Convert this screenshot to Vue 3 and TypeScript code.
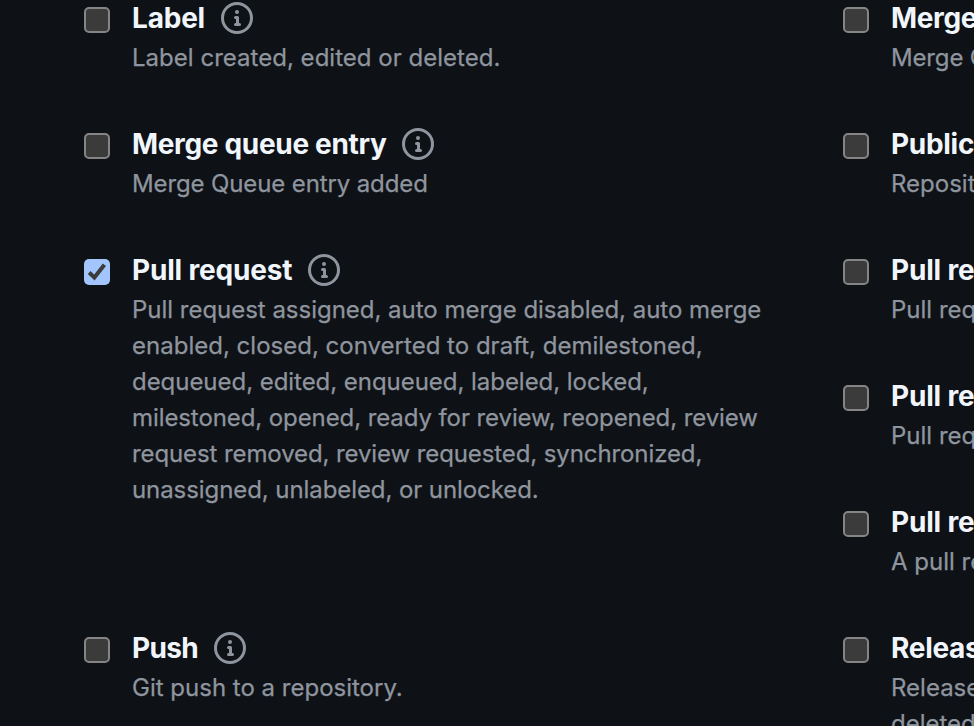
<script setup lang="ts">
interface Line { text: string; tracking?: number }
interface Item { title: string; tracking?: number; lines: Line[]; checked?: boolean; tall?: boolean }
const left: Item[] = [
  { title: 'Label', tracking: -0.2, lines: [{ text: 'Label created, edited or deleted.', tracking: 0.02 }] },
  { title: 'Merge queue entry', tracking: -0.33, lines: [{ text: 'Merge Queue entry added', tracking: -0.12 }] },
  { title: 'Pull request', tracking: -0.18, checked: true, tall: true, lines: [
    { text: 'Pull request assigned, auto merge disabled, auto merge', tracking: -0.02 },
    { text: 'enabled, closed, converted to draft, demilestoned,', tracking: 0.01 },
    { text: 'dequeued, edited, enqueued, labeled, locked,', tracking: -0.04 },
    { text: 'milestoned, opened, ready for review, reopened, review', tracking: -0.09 },
    { text: 'request removed, review requested, synchronized,', tracking: -0.1 },
    { text: 'unassigned, unlabeled, or unlocked.', tracking: -0.08 },
  ] },
  { title: 'Push', tracking: -0.65, lines: [{ text: 'Git push to a repository.' }] },
]
const right: Item[] = [
  { title: 'Merge group', tracking: -0.33, lines: [{ text: 'Merge Group requested checks', tracking: -0.15 }] },
  { title: 'Public', tracking: -0.3, lines: [{ text: 'Repository changes from private to public.' }] },
  { title: 'Pull request review comment', tracking: -0.18, lines: [{ text: 'Pull request diff comment created' }] },
  { title: 'Pull request review thread', tracking: -0.18, lines: [{ text: 'Pull request review thread resolved' }] },
  { title: 'Pull request review', tracking: -0.18, lines: [{ text: 'A pull request review submitted' }] },
  { title: 'Release', tracking: -0.3, lines: [{ text: 'Release created, edited, published,' }, { text: 'deleted, or prereleased.' }] },
]
const columns = [left, right]
const spacing = (n = 0) => ({ letterSpacing: `${n}px` })
</script>

<template>
  <main class="page">
    <section v-for="(items, c) in columns" :key="c" class="column">
      <label v-for="item in items" :key="item.title" class="item" :class="{ tall: item.tall }">
        <span class="box" :class="{ checked: item.checked }">
          <svg v-if="item.checked" width="26" height="26" viewBox="0 0 26 26"><path d="M5.2 13.5 10.4 18.6 20.4 5.8" /></svg>
        </span>
        <span class="body">
          <span class="head">
            <strong :style="spacing(item.tracking)">{{ item.title }}</strong>
            <svg class="info" width="32" height="32" viewBox="0 0 16 16"><path d="M0 8a8 8 0 1 1 16 0A8 8 0 0 1 0 8Zm8-6.5a6.5 6.5 0 1 0 0 13 6.5 6.5 0 0 0 0-13ZM6.5 7.75A.75.75 0 0 1 7.25 7h1a.75.75 0 0 1 .75.75v2.75h.25a.75.75 0 0 1 0 1.5h-2a.75.75 0 0 1 0-1.5h.25v-2h-.25a.75.75 0 0 1-.75-.75ZM8 6a1 1 0 1 1 0-2 1 1 0 0 1 0 2Z" /></svg>
          </span>
          <span v-for="line in item.lines" :key="line.text" class="line" :style="spacing(line.tracking)">{{ line.text }}</span>
        </span>
      </label>
    </section>
  </main>
</template>

<style>
body { margin: 0; background: #0e1116; overflow: hidden; }
</style>
<style scoped>
.page { width: 974px; height: 726px; overflow: hidden; box-sizing: border-box; padding-left: 84px; display: grid; grid-template-columns: 759px 759px; background: #0e1116; font-family: Inter, sans-serif; color: #8f959e; }
.item { display: flex; gap: 22px; height: 126px; }
.tall { height: 378px; }
.box { box-sizing: border-box; width: 26px; height: 26px; flex: none; margin-top: 7px; border: 2px solid #858585; border-radius: 5px; background: #3b3b3b; }
.checked { border: 0; background: #a1c5fc; }
.box svg { display: block; fill: none; stroke: #3b3b3b; stroke-width: 4; }
.body { display: block; white-space: nowrap; }
.head { display: flex; align-items: center; gap: 16px; height: 36px; }
.head strong { font-size: 28px; font-weight: 700; line-height: 36px; color: #f0f6fc; }
.info { fill: #8f959e; }
.line { display: block; height: 36px; line-height: 36px; font-size: 24px; -webkit-text-stroke: 0.25px #8f959e; margin-top: 4px; }
.line + .line { margin-top: 0; }
</style>
